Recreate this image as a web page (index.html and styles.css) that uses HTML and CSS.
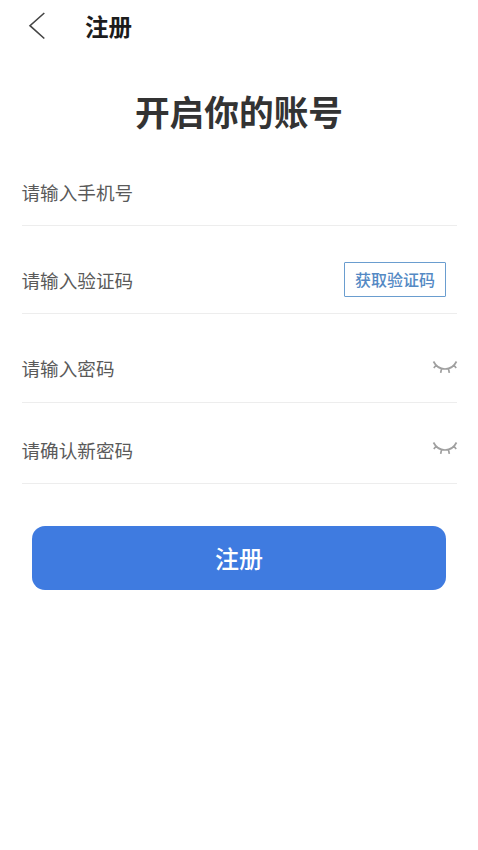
FILE: index.html
```html
<!DOCTYPE html>
<html lang="zh-CN">
<head>
<meta charset="utf-8">
<title>注册</title>
<link rel="stylesheet" href="styles.css">
</head>
<body>
<header class="nav">
  <svg class="back" viewBox="0 0 18 28"><path d="M16.3 1L2 13.7L16.3 26.5"/></svg>
  <span class="nav-title">注册</span>
</header>
<main>
  <h1 class="title">开启你的账号</h1>
  <form class="form">
    <div class="field phone"><label>请输入手机号</label></div>
    <div class="field code"><label>请输入验证码</label><button type="button" class="get-code">获取验证码</button></div>
    <div class="field password"><label>请输入密码</label><svg class="eye" viewBox="0 0 26 14"><path d="M1.5 1.5C6.5 11.5 19.5 11.5 24.5 1.5M4.3 5L1.8 8M9.5 8.7L8.7 12.8M16.5 8.7L17.3 12.8M21.7 5L24.2 8"/></svg></div>
    <div class="field confirm"><label>请确认新密码</label><svg class="eye" viewBox="0 0 26 14"><path d="M1.5 1.5C6.5 11.5 19.5 11.5 24.5 1.5M4.3 5L1.8 8M9.5 8.7L8.7 12.8M16.5 8.7L17.3 12.8M21.7 5L24.2 8"/></svg></div>
    <button type="button" class="submit">注册</button>
  </form>
</main>
</body>
</html>
```
FILE: styles.css
```css
* { box-sizing: border-box; }
body { margin: 0; min-height: 850px; background: #fff; color: #5a5a5a; font-family: "Noto Sans CJK SC", sans-serif; }
button { font-family: inherit; padding: 0; }
.nav { display: flex; align-items: center; height: 52px; padding: 0 0 1px 28px; }
.back { width: 18px; height: 28px; fill: none; stroke: #444; stroke-width: 1.6; }
.nav-title { margin-left: 39px; padding-top: 1px; font-size: 23.5px; line-height: 50px; font-weight: 700; color: #1c1c1c; }
.title { margin: 33px 0 0; text-align: center; font-size: 34.7px; line-height: 52px; font-weight: 700; color: #333; }
.form { padding: 0 21px 0 22px; }
.field { display: flex; align-items: center; justify-content: space-between; border-bottom: 1px solid #ededed; font-size: 18.6px; line-height: 28px; }
.phone { margin-top: 20px; height: 69px; padding-top: 1px; }
.code { height: 88px; padding: 19px 11px 0 0; }
.code label { padding-top: 2px; }
.password { height: 89px; padding-top: 20px; }
.confirm { height: 81px; padding-top: 13px; }
.field label { margin-left: -0.5px; }
.get-code { width: 102px; height: 35px; border: 1.5px solid #6a9dcf; border-radius: 1px; background: #fff; color: #5489c4; font-size: 16px; line-height: 32px; font-weight: 500; }
.eye { width: 26px; height: 14px; margin: -3px -1px 0 0; fill: none; stroke: #a0a0a0; stroke-width: 1.7; }
.submit { display: block; width: 414px; height: 64px; margin: 42px 0 0 10px; padding-bottom: 1px; border: 0; border-radius: 13px; background: #3f7be0; color: #fff; font-size: 24px; font-weight: 500; }
```
